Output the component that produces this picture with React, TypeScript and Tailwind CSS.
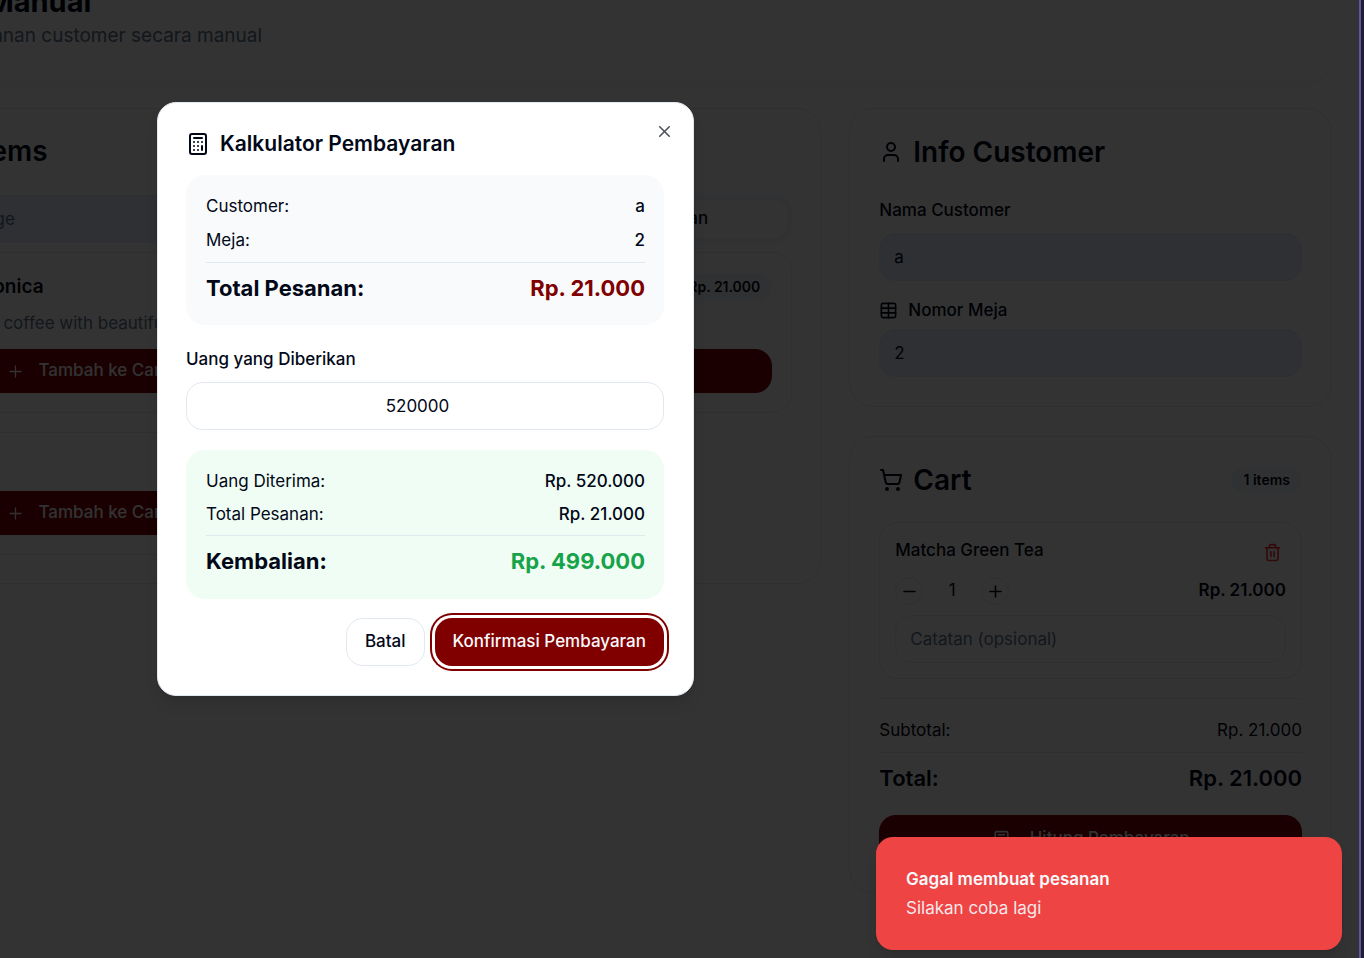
import React from "react";
import { Calculator, Minus, Plus, ShoppingCart, Table, Trash2, User, Utensils, X } from "lucide-react";

const card = "rounded-[24px] border border-slate-200 bg-white";
const field =
  "h-12 w-full rounded-[17px] border border-slate-200 px-[14px] text-[17px] outline-none placeholder:text-slate-500";
const primary =
  "flex items-center justify-center rounded-[17px] bg-[#800000] text-[17px] font-medium text-slate-50";

function Badge({ children }: { children: React.ReactNode }) {
  return (
    <span className="flex h-[26px] shrink-0 items-center rounded-full bg-slate-100 px-3 text-sm font-semibold">
      {children}
    </span>
  );
}

function MenuItem({ name, price, note }: { name: string; price: string; note?: string }) {
  return (
    <article className="flex flex-col gap-[10px] self-start rounded-[19px] border border-slate-200 px-[19px] pt-5 pb-[19px]">
      <div className="flex h-7 items-center justify-between">
        <h3 className="text-[19px] font-semibold">{name}</h3>
        <Badge>{price}</Badge>
      </div>
      {note && <p className="mb-1 truncate text-[17px] leading-6 text-slate-500">{note}</p>}
      <button type="button" className={`${primary} h-11 gap-[14px]`}>
        <Plus size={19} strokeWidth={1.6} />
        Tambah ke Cart
      </button>
    </article>
  );
}

function Row({ label, value }: { label: string; value: string }) {
  return (
    <div className="flex justify-between leading-6">
      <span>{label}</span>
      <span className="font-medium">{value}</span>
    </div>
  );
}

function TotalRow({ label, value, tone }: { label: string; value: string; tone: string }) {
  return (
    <div className="flex justify-between border-t border-slate-200 pt-2 text-[22px] leading-[34px] font-bold">
      <span>{label}</span>
      <span className={tone}>{value}</span>
    </div>
  );
}

function MenuPanel() {
  return (
    <section className={`${card} col-span-2 self-start p-7`}>
      <h2 className="flex items-center gap-2 text-[28px] leading-7 font-semibold">
        <Utensils size={24} />
        Menu Items
      </h2>
      <div className="mt-[30px] grid grid-cols-2 items-center gap-x-5 gap-y-[9px]">
        <input
          aria-label="Cari menu"
          placeholder="Cari beverage"
          className="h-12 w-full rounded-[17px] border border-slate-200 bg-[#e8f0fe] pr-3 pl-11 text-[17px] placeholder:text-slate-500"
        />
        <div className="grid h-12 grid-cols-2 rounded-[17px] bg-slate-100 p-[5px] text-[17px] font-medium">
          <button type="button" className="rounded-[14px] text-slate-500">Kopi</button>
          <button type="button" className="rounded-[14px] bg-white">Camilan</button>
        </div>
        <div className="col-span-2 grid grid-cols-2 gap-[19px]">
          <MenuItem name="Coffee Harmonica" price="Rp. 25.000" note="Classic layered coffee with beautiful layers" />
          <MenuItem name="Matcha Green Tea" price="Rp. 21.000" note="Fresh matcha" />
          <MenuItem name="Latte" price="Rp. 22.000" />
        </div>
      </div>
    </section>
  );
}

function CustomerPanel() {
  return (
    <section className={`${card} p-[29px]`}>
      <h2 className="flex items-center gap-[10px] text-[28px] leading-7 font-semibold">
        <User size={24} />
        Info Customer
      </h2>
      <label htmlFor="nama" className="mt-[30px] block text-[17px] leading-[29px] font-medium">
        Nama Customer
      </label>
      <input id="nama" defaultValue="a" className={`${field} mt-2 bg-[#e8f0fe]`} />
      <label htmlFor="meja" className="mt-5 flex items-center gap-[10px] text-[17px] leading-[19px] font-medium">
        <Table size={19} />
        Nomor Meja
      </label>
      <input id="meja" defaultValue="2" className={`${field} mt-[9px] bg-[#e8f0fe]`} />
    </section>
  );
}

function CartPanel() {
  const round = "flex size-7 items-center justify-center rounded-full border border-slate-200";
  return (
    <section className={`${card} p-[29px] text-[17px]`}>
      <div className="flex h-7 items-center justify-between">
        <h2 className="flex items-center gap-[10px] text-[28px] leading-7 font-semibold">
          <ShoppingCart size={24} />
          Cart
        </h2>
        <Badge>1 items</Badge>
      </div>
      <div className="mt-7 rounded-[19px] border border-slate-200 p-[15px]">
        <div className="flex items-start justify-between leading-6">
          <span className="font-medium">Matcha Green Tea</span>
          <button type="button" aria-label="Hapus" className="mt-[5px] mr-1 text-red-500">
            <Trash2 size={19} />
          </button>
        </div>
        <div className="mt-[15px] flex items-center">
          <button type="button" aria-label="Kurangi" className={round}>
            <Minus size={19} className="shrink-0" />
          </button>
          <span className="w-[58px] text-center">1</span>
          <button type="button" aria-label="Tambah" className={round}>
            <Plus size={19} className="shrink-0" />
          </button>
          <span className="ml-auto font-semibold">Rp. 21.000</span>
        </div>
        <input aria-label="Catatan" placeholder="Catatan (opsional)" className={`${field} mt-[10px]`} />
      </div>
      <div className="mt-[19px] border-t border-slate-200 pt-[19px]">
        <div className="flex justify-between leading-6">
          <span>Subtotal:</span>
          <span>Rp. 21.000</span>
        </div>
        <div className="mt-[10px] flex justify-between border-t border-slate-200 pt-2 text-[22px] leading-[34px] font-semibold">
          <span>Total:</span>
          <span>Rp. 21.000</span>
        </div>
      </div>
      <button type="button" className={`${primary} mt-5 h-12 w-full gap-[19px]`}>
        <Calculator size={19} />
        Hitung Pembayaran
      </button>
    </section>
  );
}

function PaymentDialog() {
  return (
    <div
      role="dialog"
      aria-labelledby="dialog-title"
      className="absolute top-[102px] left-[157px] w-[537px] rounded-[19px] border border-slate-200 bg-white py-[29px] pr-[29px] pl-7 text-[17px] shadow-lg"
    >
      <button type="button" aria-label="Tutup" className="absolute top-[19px] right-[19px] opacity-70">
        <X size={19} />
      </button>
      <h2 id="dialog-title" className="flex items-center gap-[10px] text-[21px] leading-6 font-semibold">
        <Calculator size={24} />
        Kalkulator Pembayaran
      </h2>
      <div className="mt-[19px] flex flex-col gap-[10px] rounded-[19px] bg-slate-50 pt-[19px] pr-[19px] pb-5 pl-5">
        <Row label="Customer:" value="a" />
        <Row label="Meja:" value="2" />
        <TotalRow label="Total Pesanan:" value="Rp. 21.000" tone="text-[#800000]" />
      </div>
      <label htmlFor="uang" className="mt-5 block leading-[29px] font-medium">
        Uang yang Diberikan
      </label>
      <input id="uang" type="number" defaultValue={520000} className={`${field} mt-2 text-center`} />
      <div className="mt-5 flex flex-col gap-[9px] rounded-[19px] bg-[#f0fdf4] pt-[19px] pr-[19px] pb-[21px] pl-5">
        <Row label="Uang Diterima:" value="Rp. 520.000" />
        <Row label="Total Pesanan:" value="Rp. 21.000" />
        <TotalRow label="Kembalian:" value="Rp. 499.000" tone="text-[#16a34a]" />
      </div>
      <div className="mt-[19px] flex justify-end gap-[10px] font-medium">
        <button type="button" className="h-12 rounded-[17px] border border-slate-200 px-[18px]">
          Batal
        </button>
        <button
          type="button"
          className="h-12 rounded-[17px] bg-[#800000] px-[18px] text-slate-50 ring-2 ring-[#800000] ring-offset-3 ring-offset-white"
        >
          Konfirmasi Pembayaran
        </button>
      </div>
    </div>
  );
}

export default function App() {
  return (
    <div className="relative flex h-screen overflow-hidden bg-[#1e1e2e] font-[Inter,sans-serif] text-[#020817]">
      <div className="relative mr-[3px] min-w-0 flex-1 overflow-hidden border-r-2 border-[#6353a8] bg-white">
        <main className="mr-[27px] -ml-[172px]">
          <header className="-mt-10 h-[120px] rounded-b-[24px] px-[30px] pt-6 shadow-[0_5px_15px_rgba(0,0,0,0.04)]">
            <h1 className="text-[29px] leading-9 font-bold">Pesanan Manual</h1>
            <p className="mt-[2px] text-[19px] leading-7 text-slate-500">Buat menu pesanan customer secara manual</p>
          </header>
          <div className="mt-7 grid grid-cols-3 gap-7">
            <MenuPanel />
            <div className="flex flex-col gap-[29px]">
              <CustomerPanel />
              <CartPanel />
            </div>
          </div>
        </main>
        <div className="absolute inset-0 bg-black/80" />
      </div>
      <PaymentDialog />
      <div
        role="alert"
        className="absolute right-[22px] bottom-2 w-[466px] rounded-[17px] bg-[#ef4444] p-[30px] text-[17px] leading-6 text-slate-50 shadow-lg"
      >
        <p className="font-semibold">Gagal membuat pesanan</p>
        <p className="mt-[5px] opacity-90">Silakan coba lagi</p>
      </div>
    </div>
  );
}
